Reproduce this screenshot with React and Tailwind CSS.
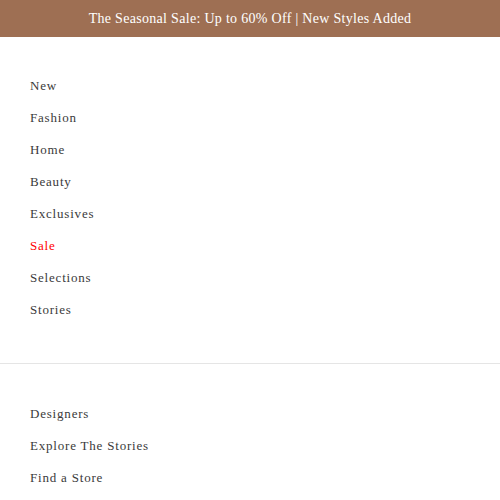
export default function App() {
    const mainLinks = ['New', 'Fashion', 'Home', 'Beauty', 'Exclusives', 'Sale', 'Selections', 'Stories'];
    const moreLinks = ['Designers', 'Explore The Stories', 'Find a Store'];

    return (
        <div className="min-h-screen bg-white font-['Liberation_Serif',serif]">
            {/* Promo banner */}
            <div className="h-[37px] bg-[#9e6f53] flex items-center justify-center text-white text-[14px] tracking-[0.3px]">
                The Seasonal Sale: Up to 60% Off | New Styles Added
            </div>

            <nav className="pt-[33px] pb-[37px] px-[30px]">
                <ul>
                    {mainLinks.map((label) => (
                        <li
                            key={label}
                            className={`h-8 flex items-center text-[13px] tracking-[0.8px] ${label === 'Sale' ? 'text-[#ff0000]' : 'text-[#3a3a3a]'}`}
                        >
                            {label}
                        </li>
                    ))}
                </ul>
            </nav>

            <div className="border-t border-[#e5e5e5]" />

            <nav className="pt-[34px] px-[30px]">
                <ul>
                    {moreLinks.map((label) => (
                        <li key={label} className="h-8 flex items-center text-[13px] tracking-[0.8px] text-[#3a3a3a]">
                            {label}
                        </li>
                    ))}
                </ul>
            </nav>
        </div>
    );
}
